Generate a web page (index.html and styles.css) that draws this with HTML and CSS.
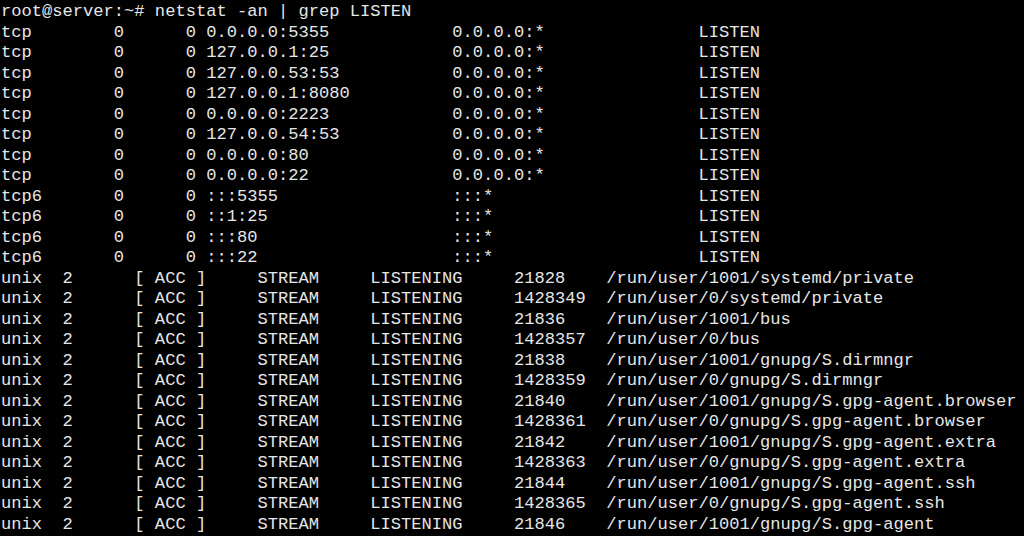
FILE: index.html
```html
<!DOCTYPE html>
<html>
<head>
<meta charset="utf-8">
<link rel="stylesheet" href="styles.css">
</head>
<body>
<pre class="term">root@server:~# netstat -an | grep LISTEN
tcp        0      0 0.0.0.0:5355            0.0.0.0:*               LISTEN
tcp        0      0 127.0.0.1:25            0.0.0.0:*               LISTEN
tcp        0      0 127.0.0.53:53           0.0.0.0:*               LISTEN
tcp        0      0 127.0.0.1:8080          0.0.0.0:*               LISTEN
tcp        0      0 0.0.0.0:2223            0.0.0.0:*               LISTEN
tcp        0      0 127.0.0.54:53           0.0.0.0:*               LISTEN
tcp        0      0 0.0.0.0:80              0.0.0.0:*               LISTEN
tcp        0      0 0.0.0.0:22              0.0.0.0:*               LISTEN
tcp6       0      0 :::5355                 :::*                    LISTEN
tcp6       0      0 ::1:25                  :::*                    LISTEN
tcp6       0      0 :::80                   :::*                    LISTEN
tcp6       0      0 :::22                   :::*                    LISTEN
unix  2      [ ACC ]     STREAM     LISTENING     21828    /run/user/1001/systemd/private
unix  2      [ ACC ]     STREAM     LISTENING     1428349  /run/user/0/systemd/private
unix  2      [ ACC ]     STREAM     LISTENING     21836    /run/user/1001/bus
unix  2      [ ACC ]     STREAM     LISTENING     1428357  /run/user/0/bus
unix  2      [ ACC ]     STREAM     LISTENING     21838    /run/user/1001/gnupg/S.dirmngr
unix  2      [ ACC ]     STREAM     LISTENING     1428359  /run/user/0/gnupg/S.dirmngr
unix  2      [ ACC ]     STREAM     LISTENING     21840    /run/user/1001/gnupg/S.gpg-agent.browser
unix  2      [ ACC ]     STREAM     LISTENING     1428361  /run/user/0/gnupg/S.gpg-agent.browser
unix  2      [ ACC ]     STREAM     LISTENING     21842    /run/user/1001/gnupg/S.gpg-agent.extra
unix  2      [ ACC ]     STREAM     LISTENING     1428363  /run/user/0/gnupg/S.gpg-agent.extra
unix  2      [ ACC ]     STREAM     LISTENING     21844    /run/user/1001/gnupg/S.gpg-agent.ssh
unix  2      [ ACC ]     STREAM     LISTENING     1428365  /run/user/0/gnupg/S.gpg-agent.ssh
unix  2      [ ACC ]     STREAM     LISTENING     21846    /run/user/1001/gnupg/S.gpg-agent</pre>
</body>
</html>
```
FILE: styles.css
```css
html, body {
  margin: 0;
  padding: 0;
  background: #000;
  height: 100%;
  overflow: hidden;
}
.term {
  margin: 0;
  padding: 2px 0 0 1px;
  color: #e6e6e6;
  font-family: "Liberation Mono", "Courier New", monospace;
  font-size: 17.1px;
  line-height: 20.5px;
  white-space: pre;
}
```
